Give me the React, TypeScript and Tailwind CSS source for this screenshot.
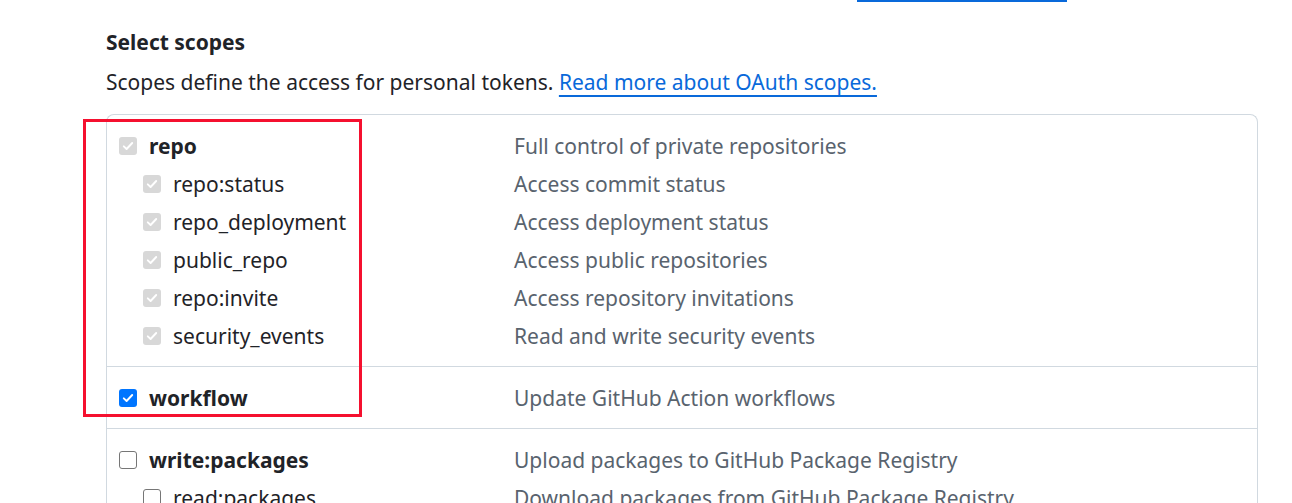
import React from 'react';

type Scope = {
  name: string;
  desc: string;
  state: 'disabled' | 'checked' | 'off';
  children?: { name: string; desc: string; state: 'disabled' | 'checked' | 'off' }[];
};

const scopes: Scope[] = [
  {
    name: 'repo',
    desc: 'Full control of private repositories',
    state: 'disabled',
    children: [
      { name: 'repo:status', desc: 'Access commit status', state: 'disabled' },
      { name: 'repo_deployment', desc: 'Access deployment status', state: 'disabled' },
      { name: 'public_repo', desc: 'Access public repositories', state: 'disabled' },
      { name: 'repo:invite', desc: 'Access repository invitations', state: 'disabled' },
      { name: 'security_events', desc: 'Read and write security events', state: 'disabled' },
    ],
  },
  { name: 'workflow', desc: 'Update GitHub Action workflows', state: 'checked' },
  {
    name: 'write:packages',
    desc: 'Upload packages to GitHub Package Registry',
    state: 'off',
    children: [{ name: 'read:packages', desc: 'Download packages from GitHub Package Registry', state: 'off' }],
  },
];

function Box({ state }: { state: Scope['state'] }) {
  if (state === 'off') {
    return <span className="w-[18px] h-[18px] shrink-0 rounded-[3px] border border-[#767676] bg-white" />;
  }
  const bg = state === 'checked' ? 'bg-[#0075ff]' : 'bg-[#d8d8d8]';
  return (
    <span className={`w-[18px] h-[18px] shrink-0 rounded-[3px] ${bg} flex items-center justify-center`}>
      <svg viewBox="0 0 16 16" className="w-[14px] h-[14px]" fill="none">
        <path d="M3.2 8.4 6.4 11.4 12.8 4.6" stroke="white" strokeWidth="2.2" strokeLinecap="round" strokeLinejoin="round" />
      </svg>
    </span>
  );
}

function Row({ name, desc, state, sub }: { name: string; desc: string; state: Scope['state']; sub?: boolean }) {
  return (
    <div className="flex items-center h-[38px]">
      <label className={`w-[407px] flex items-center gap-3 ${sub ? 'pl-9' : 'pl-3'}`}>
        <Box state={state} />
        <span className={sub ? 'text-[#1f2328]' : 'font-bold text-[#1f2328]'}>{name}</span>
      </label>
      <span className="text-[#59636e] whitespace-nowrap">{desc}</span>
    </div>
  );
}

export default function App() {
  return (
    <div className="relative w-[1292px] h-[503px] overflow-hidden bg-white text-[21px] leading-[28px]" style={{ fontFamily: '"Noto Sans", sans-serif' }}>
      <div className="ml-[857px] w-[210px] h-[2px] bg-[#0969da]" />
      <div className="pl-[106px] pt-[26px]">
        <h3 className="font-bold text-[#1f2328]">Select scopes</h3>
        <p className="mt-[12px] text-[#1f2328]">
          Scopes define the access for personal tokens.{' '}
          <a className="text-[#0969da] underline decoration-2 underline-offset-[5px]">Read more about OAuth scopes.</a>
        </p>
        <div className="mt-[18px] w-[1152px] rounded-t-lg border border-b-0 border-[#d1d9e0]">
          {scopes.map((s, i) => (
            <div key={s.name} className={`pt-[12px] pb-[11px] ${i > 0 ? 'border-t border-[#d1d9e0]' : ''}`}>
              <Row name={s.name} desc={s.desc} state={s.state} />
              {s.children?.map(c => (
                <Row key={c.name} name={c.name} desc={c.desc} state={c.state} sub />
              ))}
            </div>
          ))}
        </div>
      </div>
      <div className="absolute left-[83px] top-[119px] w-[279px] h-[298px] border-[3px] border-[#f5102f]" />
    </div>
  );
}
